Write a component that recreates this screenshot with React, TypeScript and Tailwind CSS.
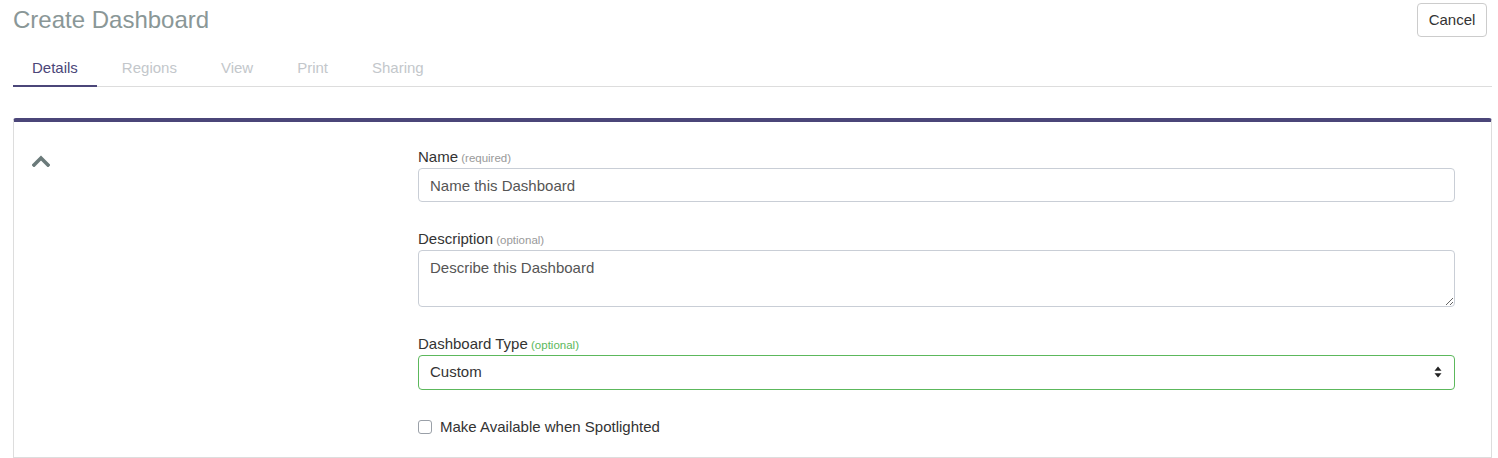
import React from 'react';

const tabs = ['Details', 'Regions', 'View', 'Print', 'Sharing'];

const FieldLabel: React.FC<{ text: string; hint: string; green?: boolean }> = ({ text, hint, green }) => (
  <label className="block h-[21px] text-[15px] leading-[21px] text-[#333] mb-[1px]">
    {text}
    <small className={`text-[11.5px] leading-[0] ${green ? 'text-[#5cb85c]' : 'text-[#999]'}`}> {hint}</small>
  </label>
);

const App: React.FC = () => {
  return (
    <div className="min-h-screen bg-white pl-[13px] pr-[6px] font-['Liberation_Sans',Arial,sans-serif]">
      {/* header */}
      <div className="flex justify-between items-start h-[40px] pr-[5px]">
        <h1 className="text-[24px] leading-[40px] text-[#8a9797]">Create Dashboard</h1>
        <button className="mt-[3px] h-[34px] w-[70px] rounded-[4px] border border-[#ccc] bg-white text-[15px] text-[#333]">
          Cancel
        </button>
      </div>

      {/* tabs */}
      <div className="flex gap-[6px] border-b border-[#ddd]">
        {tabs.map((t, i) => (
          <div
            key={t}
            className={`-mb-px px-[19px] pt-[17px] pb-[7px] text-[15px] leading-[21px] border-b-2 ${
              i === 0 ? 'border-[#4b4679] text-[#4b4679]' : 'border-transparent text-[#c3c7cb]'
            }`}
          >
            {t}
          </div>
        ))}
      </div>

      {/* card */}
      <div className="mt-[31px] border border-[#ddd] border-t-4 border-t-[#4b4679] rounded-t-[3px] flex min-h-[340px]">
        <div className="w-[404px] pl-[18px] pt-[33px]">
          <svg width="18" height="12" viewBox="0 0 18 12" className="block">
            <path d="M2 10 L9 3 L16 10" fill="none" stroke="#6b7a7a" strokeWidth="3.6" strokeLinecap="square" />
          </svg>
        </div>

        <div className="flex-1 pr-[36px] pt-[24px]">
          <FieldLabel text="Name" hint="(required)" />
          <input
            className="block w-full h-[34px] px-[11px] rounded-[4px] border border-[#c9ced6] text-[15px] text-[#555] placeholder:text-[#555] outline-none"
            placeholder="Name this Dashboard"
          />

          <div className="mt-[26px]">
            <FieldLabel text="Description" hint="(optional)" />
            <textarea
              className="block w-full h-[57px] px-[11px] py-[6px] leading-[21px] rounded-[4px] border border-[#c9ced6] text-[15px] text-[#555] placeholder:text-[#555] outline-none"
              placeholder="Describe this Dashboard"
            />
          </div>

          <div className="mt-[26px]">
            <FieldLabel text="Dashboard Type" hint="(optional)" green />
            <div className="relative">
              <select className="block w-full h-[35px] px-[11px] appearance-none rounded-[4px] border border-[#5cb85c] bg-white text-[15px] text-[#333] outline-none">
                <option>Custom</option>
              </select>
              <svg
                width="8"
                height="12"
                viewBox="0 0 8 12"
                className="absolute right-[13px] top-[11px] pointer-events-none"
              >
                <path d="M4 0.5 L7.5 4.8 L0.5 4.8 Z" fill="#222" />
                <path d="M4 11.5 L7.5 7.2 L0.5 7.2 Z" fill="#222" />
              </svg>
            </div>
          </div>

          <label className="mt-[26px] flex items-center gap-[8px] text-[15px] leading-[21px] text-[#333]">
            <input
              type="checkbox"
              className="appearance-none w-[14px] h-[14px] rounded-[3px] border border-[#9aa0a8] bg-white"
            />
            Make Available when Spotlighted
          </label>
        </div>
      </div>
    </div>
  );
};

export default App;
